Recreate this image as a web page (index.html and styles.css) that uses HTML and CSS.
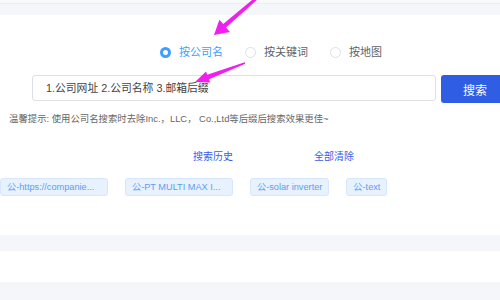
FILE: index.html
```html
<!DOCTYPE html>
<html lang="zh-CN">
<head>
<meta charset="utf-8">
<title>搜索</title>
<link rel="stylesheet" href="styles.css">
</head>
<body>
<div class="page">
  <div class="band-top"></div>
  <main class="search">
    <div class="radios">
      <label class="radio active"><span class="dot"></span><span class="label">按公司名</span></label>
      <label class="radio"><span class="dot"></span><span class="label">按关键词</span></label>
      <label class="radio"><span class="dot"></span><span class="label">按地图</span></label>
    </div>
    <div class="search-row">
      <div class="input">1.公司网址 2.公司名称 3.邮箱后缀</div>
      <button class="btn">搜索</button>
    </div>
    <p class="tip">温馨提示: 使用公司名搜索时去除Inc.，LLC， Co.,Ltd等后缀后搜索效果更佳~</p>
    <div class="history-head">
      <a class="link">搜索历史</a>
      <a class="link">全部清除</a>
    </div>
    <div class="tags">
      <span class="tag trunc">公-https://companie...</span>
      <span class="tag trunc">公-PT MULTI MAX I...</span>
      <span class="tag">公-solar inverter</span>
      <span class="tag">公-text</span>
    </div>
  </main>
  <div class="band"></div>
  <div class="blank"></div>
  <div class="band band-last"></div>
  <svg class="annot" width="500" height="300" viewBox="0 0 500 300">
    <polygon points="214,35 229.8,31.9 226,27.5 259,-1.9 257,-4.1 223.2,24.1 219.4,19.7"/>
    <polygon points="195,82 210.2,82.6 209,79.3 245.3,63.7 244.7,62.3 207.2,74.7 206,71.4"/>
  </svg>
</div>
</body>
</html>
```

FILE: styles.css
```css
html, body {
  margin: 0;
  padding: 0;
  background: #fff;
}
body {
  font-family: "Liberation Sans", "Noto Sans CJK SC", sans-serif;
  width: 500px;
  height: 300px;
  overflow: hidden;
}
.page {
  position: relative;
  width: 500px;
  height: 300px;
  overflow: hidden;
}
.band-top {
  height: 12px;
  border-top: 3px solid #f8f9fb;
  background: #f5f6f9;
  box-shadow: inset 0 1px 0 #eceef2;
}
.search {
  height: 220px;
  background: #fff;
  padding-top: 29px;
  box-sizing: border-box;
}
.radios {
  display: flex;
  align-items: center;
  height: 16px;
  padding-left: 160px;
  gap: 22px;
}
.radio {
  display: flex;
  align-items: center;
  gap: 8px;
  font-size: 11px;
  color: #606266;
  line-height: 16px;
}
.dot {
  width: 11px;
  height: 11px;
  box-sizing: border-box;
  border: 1px solid #dcdfe6;
  border-radius: 50%;
  background: #fff;
}
.radio.active .dot {
  border: 3.5px solid #409eff;
}
.radio.active .label {
  color: #409eff;
}
.search-row {
  display: flex;
  align-items: flex-start;
  margin-top: 15px;
  padding-left: 32px;
}
.input {
  flex: none;
  width: 404px;
  height: 26px;
  box-sizing: border-box;
  border: 1px solid #dcdfe6;
  border-radius: 3px;
  padding-left: 13px;
  font-size: 10.8px;
  line-height: 24px;
  color: #444;
}
.btn {
  flex: none;
  margin-left: 5px;
  width: 72px;
  height: 28px;
  border: 0;
  border-radius: 3px;
  background: #2f5de4;
  color: #fff;
  font-family: inherit;
  font-size: 12px;
  text-align: left;
  padding: 0 0 0 22px;
}
.tip {
  margin: 9px 0 0;
  padding-left: 9px;
  font-size: 9.4px;
  line-height: 14px;
  color: #666;
}
.history-head {
  display: flex;
  gap: 81px;
  margin-top: 24px;
  padding-left: 193px;
}
.link {
  font-size: 10px;
  line-height: 14px;
  color: #3c5ce6;
}
.tags {
  display: flex;
  gap: 17px;
  margin-top: 14px;
}
.tag {
  height: 18px;
  box-sizing: border-box;
  border: 1px solid #d6e6fb;
  border-radius: 3px;
  background: #e8f2fe;
  color: #5c9df3;
  font-size: 9.2px;
  line-height: 16px;
  padding: 0 6px;
  white-space: nowrap;
}
.tag.trunc {
  width: 108px;
}
.band {
  height: 16px;
  background: #f5f6f9;
}
.blank {
  height: 31px;
  background: #fff;
}
.band-last {
  height: 18px;
}
.annot {
  position: absolute;
  left: 0;
  top: 0;
  pointer-events: none;
}
.annot polygon {
  fill: #f01ef0;
}
```
